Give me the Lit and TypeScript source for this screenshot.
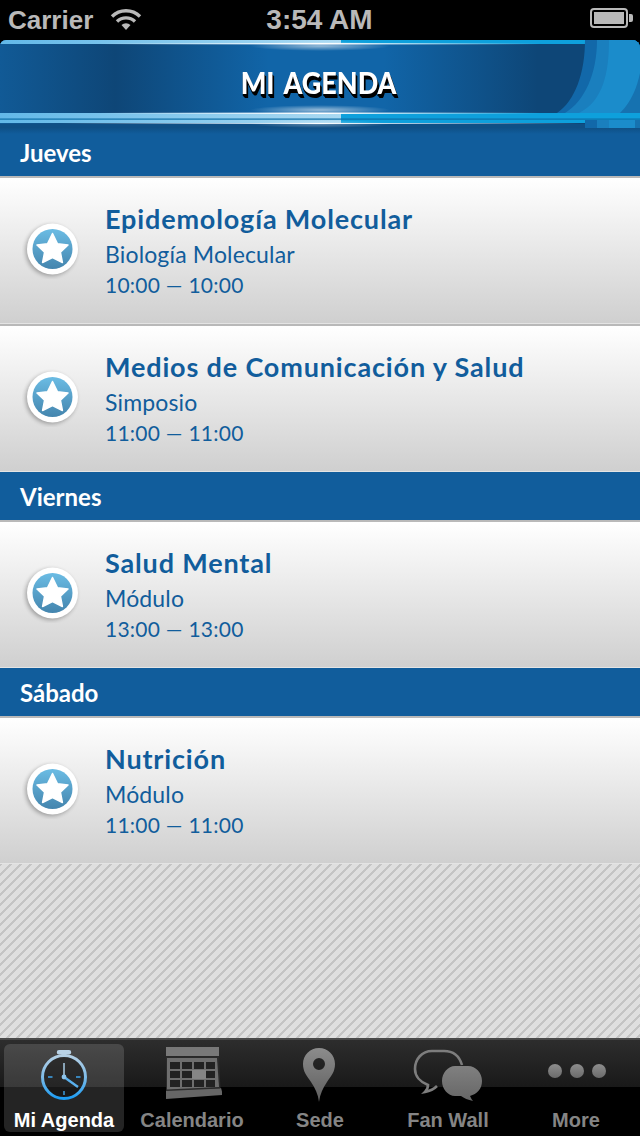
import { LitElement, html, css, svg } from "lit";
import { customElement } from "lit/decorators.js";

const star = html`<svg class="badge" width="60" height="60" viewBox="0 0 60 60">
  <defs>
    <linearGradient id="bg" x1="0" y1="0" x2="0" y2="1"><stop offset="0" stop-color="#6bbce4"/><stop offset="1" stop-color="#4485ae"/></linearGradient>
    <filter id="sh" x="-30%" y="-30%" width="160%" height="160%"><feGaussianBlur stdDeviation="2"/></filter>
  </defs>
  <circle cx="29" cy="31.5" r="25.500" fill="#000" opacity=".3" filter="url(#sh)"/>
  <circle cx="30.500" cy="30" r="25.500" fill="#fff"/>
  <circle cx="30.500" cy="30" r="20" fill="url(#bg)"/>
  <path d="M30.500 14.500l5 10.300 10.500 1.200-7.600 7.200 2 10.300-9.900-5-9.900 5 2-10.300-7.600-7.200 10.500-1.200z" fill="#fff" stroke="#fff" stroke-width="1.500" stroke-linejoin="round"/>
</svg>`;

type Ev = { t: string; s: string; h: string };
const sections: { day: string; ev: Ev[] }[] = [
  { day: "Jueves", ev: [
    { t: "Epidemología Molecular", s: "Biología Molecular", h: "10:00 — 10:00" },
    { t: "Medios de Comunicación y Salud", s: "Simposio", h: "11:00 — 11:00" },
  ]},
  { day: "Viernes", ev: [{ t: "Salud Mental", s: "Módulo", h: "13:00 — 13:00" }] },
  { day: "Sábado", ev: [{ t: "Nutrición", s: "Módulo", h: "11:00 — 11:00" }] },
];

const clock = html`<svg width="60" height="60" viewBox="0 0 60 60">
  <defs><linearGradient id="cg" x1="0" y1="0" x2="0" y2="1"><stop offset="0" stop-color="#b4cfe4"/><stop offset=".5" stop-color="#7fbce8"/><stop offset="1" stop-color="#1c9cf2"/></linearGradient></defs>
  <path d="M25 6h10a2 2 0 0 1 0 4.500h-2.500V13h-5v-2.500H25a2 2 0 0 1 0-4.500z" fill="#b9d2e6"/>
  <circle cx="30" cy="33" r="21.500" fill="rgba(0,0,0,.35)" stroke="url(#cg)" stroke-width="3"/>
  <path d="M30 47v4M14 33h4.500M42 33h4.500" stroke="#3fa4ea" stroke-width="1.400"/>
  <path d="M30 19v14" stroke="#a9cde6" stroke-width="1.500"/>
  <path d="M30 33l14 10" stroke="#5ab0ec" stroke-width="2.400"/>
  <circle cx="30" cy="33" r="2.400" fill="#8cc4ec"/>
</svg>`;

const calCols = [8, 20, 32, 44];
const calRows = [18, 27, 36];
const calendar = html`<svg width="60" height="60" viewBox="0 0 60 60">
  <path d="M4 46l55-2 2 7-57 4z" fill="#666"/>
  <rect x="4" y="3" width="53" height="9" fill="#787878"/>
  <path d="M4 12.500h53l1.500 32L4 47z" fill="#2a2a2a"/>
  <path d="M5 14h50l2 29L5 45.500z" fill="#6e6e6e"/>
  ${calCols.map((x, c) => calRows.map((y, r) => c === 2 && r === 1
    ? svg`<rect x="${x - 2}" y="${y - 1}" width="14" height="9" fill="#858585"/>`
    : svg`<rect x="${x}" y="${y}" width="${c === 3 ? 9 : 10}" height="7" fill="#222"/>`))}
</svg>`;

const pin = html`<svg width="44" height="60" viewBox="0 0 44 60">
  <defs><linearGradient id="pg" x1="0" y1="0" x2="0" y2="1"><stop offset="0" stop-color="#8c8c8c"/><stop offset="1" stop-color="#5e5e5e"/></linearGradient></defs>
  <path fill-rule="evenodd" d="M21 4C12 4 5 11 5 20c0 8 4 12 8 18 4 6 7 12 8 20 1-8 4-14 8-20 4-6 8-10 8-18C37 11 30 4 21 4zm0 10a6 6 0 1 1 0 12 6 6 0 0 1 0-12z" fill="url(#pg)"/>
</svg>`;

const bubbles = html`<svg width="72" height="60" viewBox="0 0 72 60">
  <defs><linearGradient id="bbl" x1="0" y1="0" x2="0" y2="1"><stop offset="0" stop-color="#808080"/><stop offset="1" stop-color="#666"/></linearGradient></defs>
  <path d="M50 21C47 11 40 7 32 7H20C10 7 3 15 3 25c0 7 5 13 13 16 0 3-1 5-3 7 5-1 9-3 12-6" fill="none" stroke="#7d7d7d" stroke-width="2.600"/>
  <path d="M43 22h13c8 0 14 7 14 15s-5 13-12 15c1 2 2 4 3 5-5-1-9-3-12-5h-6c-7 0-13-7-13-15s6-15 13-15z" fill="url(#bbl)"/>
</svg>`;

const dots = html`<svg width="60" height="60" viewBox="0 0 60 60"><defs><linearGradient id="dg" x1="0" y1="0" x2="0" y2="1"><stop offset="0" stop-color="#8d8d8d"/><stop offset="1" stop-color="#6b6b6b"/></linearGradient></defs>
  <circle cx="9" cy="27" r="7" fill="url(#dg)"/><circle cx="31" cy="27" r="7" fill="url(#dg)"/><circle cx="53" cy="27" r="7" fill="url(#dg)"/></svg>`;

@customElement("app-root")
export class AppRoot extends LitElement {
  static styles = css`
    :host { display: flex; flex-direction: column; width: 640px; height: 1136px; overflow: hidden; background: #000; font-family: Lato, "Open Sans", sans-serif; }
    .status { flex: none; height: 40px; display: grid; grid-template-columns: 1fr auto 1fr; align-items: center; padding: 0 6px 0 8px; color: #b9b9b9; font: 700 26px/40px "Liberation Sans", Arial, sans-serif; }
    .status .left { display: flex; align-items: center; }
    .status svg.wifi { margin-left: 17px; margin-top: -2px; }
    .status .time { font-size: 28px; margin-left: -3px; }
    .status svg.bat { justify-self: end; margin-top: -2px; }

    .header { flex: none; height: 88px; position: relative; overflow: hidden; border-radius: 6px 8px 0 0; background: #115d9c; display: flex; align-items: center; justify-content: center; }
    .header .bg { position: absolute; inset: 0; }
    .title { position: relative; color: #fff; font: 900 31px/1 Lato, sans-serif; word-spacing: 4px; margin: -4px 0 0 -2px; transform: scaleX(.87); text-shadow: 0 2px 0 #000, 1px 3px 0 #000, 2px 4px 0 #000; }

    .sec { flex: none; height: 48px; box-sizing: content-box; background: #115d9c; border-bottom: 2px solid #b9b9b9; display: flex; align-items: center; padding-left: 20px; color: #fff; font-weight: 700; font-size: 24px; }
    .sec.first { background: linear-gradient(#0f5086 0, #115d9c 6px); }
    .row { flex: none; height: 146px; display: flex; align-items: center; background: linear-gradient(#fff, #cfcfcf); box-shadow: inset 0 -1px 0 #e4e4e4; color: #115d9c; }
    .row.sep { border-bottom: 2px solid #b9b9b9; }
    .badge { flex: none; margin: -4px 23px 0 22px; }
    .txt { display: flex; flex-direction: column; margin-top: -2px; }
    .t { font-weight: 700; font-size: 27px; line-height: 34px; letter-spacing: .85px; white-space: nowrap; }
    .s { font-size: 23px; line-height: 36px; letter-spacing: .15px; }
    .h { font-size: 21px; line-height: 26px; letter-spacing: .25px; }

    .pat { flex: 1; min-height: 0; background-color: #d8d8d8; background-image: linear-gradient(135deg, #c4c4c4 0 14%, #dfdfdf 14% 50%, #c4c4c4 50% 64%, #dfdfdf 64% 100%); background-size: 10px 10px; }

    .tabs { flex: none; height: 98px; border-top: 2px solid #4a4a4a; box-sizing: border-box; background: linear-gradient(#2d2d2d 0, #191919 47px, #000 47px); display: flex; gap: 8px; padding: 4px 0 4px 4px; }
    .tab { flex: none; width: 120px; border-radius: 6px; display: flex; flex-direction: column; align-items: center; color: #858585; font: 700 20px/24px "Liberation Sans", Arial, sans-serif; }
    .tab.on { color: #fff; background: rgba(255,255,255,.14); }
    .ico { height: 66px; display: flex; align-items: flex-start; justify-content: center; }
    .lab { white-space: nowrap; }
  `;

  render() {
    const tabs = [
      { i: clock, l: "Mi Agenda", on: true },
      { i: calendar, l: "Calendario" },
      { i: pin, l: "Sede" },
      { i: bubbles, l: "Fan Wall" },
      { i: dots, l: "More" },
    ];
    return html`
      <div class="status">
        <div class="left"><span>Carrier</span>
        <svg class="wifi" width="32" height="24" viewBox="0 0 32 24" fill="none" stroke="#b9b9b9" stroke-width="3.400">
          <path d="M2 9.500a20 20 0 0 1 28 0"/><path d="M7 14.500a13 13 0 0 1 18 0"/><path d="M16 23l-4.500-5a6.500 6.500 0 0 1 9 0z" fill="#b9b9b9" stroke="none"/>
        </svg></div>
        <span class="time">3:54 AM</span>
        <svg class="bat" width="44" height="22" viewBox="0 0 44 22">
          <rect x="1" y="1" width="36" height="18" rx="3" fill="none" stroke="#b9b9b9" stroke-width="2"/>
          <rect x="4" y="4" width="30" height="12" fill="#b9b9b9"/>
          <path d="M39 6h2a2 2 0 0 1 2 2v4a2 2 0 0 1-2 2h-2z" fill="#b9b9b9"/>
        </svg>
      </div>
      <div class="header">
        <svg class="bg" width="640" height="88" viewBox="0 0 640 88">
          <defs>
            <linearGradient id="hb" x1="0" x2="1" y1="0" y2="0">
              <stop offset="0" stop-color="#115a96"/><stop offset=".18" stop-color="#0e4677"/><stop offset=".42" stop-color="#1165a8"/>
              <stop offset=".6" stop-color="#1165a8"/><stop offset=".84" stop-color="#0e4677"/><stop offset="1" stop-color="#0e4677"/>
            </linearGradient>
            <linearGradient id="top" x1="0" x2="1" y1="0" y2="0">
              <stop offset="0" stop-color="#62b8e8"/><stop offset=".533" stop-color="#a9d9f2"/><stop offset=".533" stop-color="#0ea0dc"/><stop offset="1" stop-color="#0ea0dc"/>
            </linearGradient>
            <linearGradient id="sheen" x1="0" x2="1" y1="0" y2="0">
              <stop offset="0" stop-color="#fff" stop-opacity="0"/><stop offset=".5" stop-color="#fff" stop-opacity="1"/><stop offset="1" stop-color="#fff" stop-opacity="0"/>
            </linearGradient>
            <radialGradient id="glow" cx=".5" cy=".5" r=".5"><stop offset="0" stop-color="#fff" stop-opacity=".55"/><stop offset="1" stop-color="#fff" stop-opacity="0"/></radialGradient>
          </defs>
          <rect width="640" height="88" fill="url(#hb)"/>
          <rect width="640" height="4" fill="url(#top)"/>
          <rect x="100" y="3" width="440" height="1.500" fill="url(#sheen)"/>
          <ellipse cx="320" cy="6" rx="70" ry="5" fill="url(#glow)"/>
          <rect y="73" width="640" height="6" fill="url(#top)"/>
          <rect y="79" width="640" height="4" fill="url(#top)"/>
          <rect x="100" y="72.500" width="440" height="1.500" fill="url(#sheen)"/>
          <rect x="60" y="83" width="520" height="1.800" fill="url(#sheen)"/>
          <rect y="84" width="585" height="4" fill="#0f4f85"/>
          <ellipse cx="320" cy="70" rx="70" ry="5" fill="url(#glow)"/>
          <ellipse cx="320" cy="84" rx="70" ry="4" fill="url(#glow)" opacity=".6"/>
          <path d="M585 0h55v73H557c18-12 28-40 28-73z" fill="#1268a9"/>
          <path d="M597 0h43v73H565c20-12 32-40 32-73z" fill="#1a7fbe"/>
          <path d="M609 0h31v37c-3 12-9 25-17 36h-44c24-12 30-40 30-73z" fill="#1b8ccb"/>
          <path d="M640 33c-3 14-8 28-20 40h20z" fill="#1672b0"/>
          <rect y="78.500" width="640" height="1.200" fill="#0c6fa8"/>
          <rect x="585" y="80" width="55" height="8" fill="#1268a9"/>
          <rect x="597" y="80" width="12" height="8" fill="#1a7fbe"/>
          <rect x="609" y="80" width="26" height="8" fill="#1b8ccb"/>
          <rect x="635" y="80" width="5" height="8" fill="#1672b0"/>
        </svg>
        <div class="title">MI AGENDA</div>
      </div>
      ${sections.map((sec, si) => html`
        <div class="sec ${si === 0 ? "first" : ""}">${sec.day}</div>
        ${sec.ev.map((e, ei) => html`
          <div class="row ${ei < sec.ev.length - 1 ? "sep" : ""}">
            ${star}
            <div class="txt">
              <div class="t">${e.t}</div>
              <div class="s">${e.s}</div>
              <div class="h">${e.h}</div>
            </div>
          </div>`)}
      `)}
      <div class="pat"></div>
      <div class="tabs">
        ${tabs.map((t) => html`<div class="tab ${t.on ? "on" : ""}"><div class="ico">${t.i}</div><div class="lab">${t.l}</div></div>`)}
      </div>
    `;
  }
}
